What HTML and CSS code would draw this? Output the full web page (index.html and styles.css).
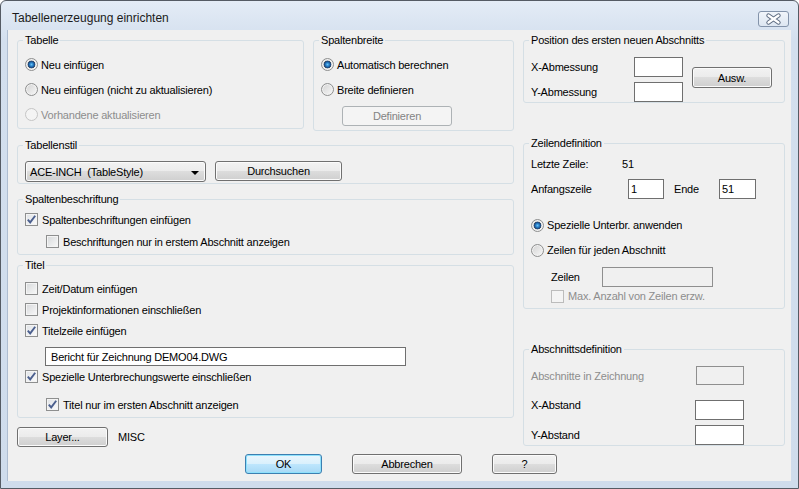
FILE: index.html
```html
<!DOCTYPE html>
<html lang="de">
<head>
    <meta charset="UTF-8">
    <title>Tabellenerzeugung einrichten</title>
    <link rel="stylesheet" href="styles.css">
</head>
<body>

<div class="window">
    <div class="titlebar">
        <span class="title">Tabellenerzeugung einrichten</span>
        <button class="close" type="button">
            <svg width="29" height="14" viewBox="0 0 29 14">
                <path d="M9.5 3.5 L19.5 10.5 M19.5 3.5 L9.5 10.5" stroke="#5d6b80" stroke-width="4.4" stroke-linecap="round" fill="none"/>
                <path d="M9.5 3.5 L19.5 10.5 M19.5 3.5 L9.5 10.5" stroke="#ffffff" stroke-width="2.4" stroke-linecap="round" fill="none"/>
            </svg>
        </button>
    </div>

    <div class="client">
        <div class="main">
            <!-- linke Spalte -->
            <div class="col-left">
                <div class="top-row">
                    <fieldset class="box box-tabelle">
                        <legend>Tabelle</legend>
                        <div class="opt row25"><span class="radio on"></span>Neu einfügen</div>
                        <div class="opt row25"><span class="radio"></span>Neu einfügen (nicht zu aktualisieren)</div>
                        <div class="opt row25 disabled"><span class="radio off"></span>Vorhandene aktualisieren</div>
                    </fieldset>

                    <fieldset class="box box-breite">
                        <legend>Spaltenbreite</legend>
                        <div class="opt row25"><span class="radio on"></span>Automatisch berechnen</div>
                        <div class="opt row25"><span class="radio"></span>Breite definieren</div>
                        <button class="btn btn-definieren" type="button" disabled>Definieren</button>
                    </fieldset>
                </div>

                <fieldset class="box box-stil">
                    <legend>Tabellenstil</legend>
                    <div class="stil-row">
                        <div class="combo"><span class="combo-text">ACE-INCH  (TableStyle)</span><span class="arrow"></span></div>
                        <button class="btn btn-durchsuchen" type="button">Durchsuchen</button>
                    </div>
                </fieldset>

                <fieldset class="box box-beschr">
                    <legend>Spaltenbeschriftung</legend>
                    <div class="opt row17 first"><span class="check on"><svg width="11" height="11" viewBox="0 0 11 11"><path d="M1.8 5.6 L4.2 8.4 L9.2 1.8" stroke="#4b5f8e" stroke-width="1.9" fill="none"/></svg></span>Spaltenbeschriftungen einfügen</div>
                    <div class="opt row17 indent gap5"><span class="check"></span>Beschriftungen nur in erstem Abschnitt anzeigen</div>
                </fieldset>

                <fieldset class="box box-titel">
                    <legend>Titel</legend>
                    <div class="opt row17"><span class="check"></span>Zeit/Datum einfügen</div>
                    <div class="opt row17 gap4"><span class="check"></span>Projektinformationen einschließen</div>
                    <div class="opt row17 gap4"><span class="check on"><svg width="11" height="11" viewBox="0 0 11 11"><path d="M1.8 5.6 L4.2 8.4 L9.2 1.8" stroke="#4b5f8e" stroke-width="1.9" fill="none"/></svg></span>Titelzeile einfügen</div>
                    <input class="field field-titel" type="text" value="Bericht für Zeichnung DEMO04.DWG">
                    <div class="opt row17 gap2"><span class="check on"><svg width="11" height="11" viewBox="0 0 11 11"><path d="M1.8 5.6 L4.2 8.4 L9.2 1.8" stroke="#4b5f8e" stroke-width="1.9" fill="none"/></svg></span>Spezielle Unterbrechungswerte einschließen</div>
                    <div class="opt row17 indent gap11"><span class="check on"><svg width="11" height="11" viewBox="0 0 11 11"><path d="M1.8 5.6 L4.2 8.4 L9.2 1.8" stroke="#4b5f8e" stroke-width="1.9" fill="none"/></svg></span>Titel nur im ersten Abschnitt anzeigen</div>
                </fieldset>

                <div class="layer-row">
                    <button class="btn btn-layer" type="button">Layer...</button>
                    <span class="layer-name">MISC</span>
                </div>
            </div>

            <!-- rechte Spalte -->
            <div class="col-right">
                <fieldset class="box box-position">
                    <legend>Position des ersten neuen Abschnitts</legend>
                    <div class="pos-row">
                        <div class="pos-grid">
                            <span>X-Abmessung</span><input class="field" type="text" value="">
                            <span>Y-Abmessung</span><input class="field" type="text" value="">
                        </div>
                        <button class="btn btn-ausw" type="button">Ausw.</button>
                    </div>
                </fieldset>

                <fieldset class="box box-zeilen">
                    <legend>Zeilendefinition</legend>
                    <div class="z-row z-letzte"><span class="z-lbl1">Letzte Zeile:</span><span>51</span></div>
                    <div class="z-row z-anfang">
                        <span class="z-lbl2">Anfangszeile</span>
                        <input class="field f-anfang" type="text" value="1">
                        <span class="z-ende">Ende</span>
                        <input class="field f-ende" type="text" value="51">
                    </div>
                    <div class="opt row20 z-radio1"><span class="radio on"></span>Spezielle Unterbr. anwenden</div>
                    <div class="opt row20 gap5"><span class="radio"></span>Zeilen für jeden Abschnitt</div>
                    <div class="z-row z-anzahl">
                        <span class="z-lbl3">Zeilen</span>
                        <input class="field f-zeilen" type="text" value="" disabled>
                    </div>
                    <div class="opt row14 z-max disabled"><span class="check off"></span>Max. Anzahl von Zeilen erzw.</div>
                </fieldset>

                <fieldset class="box box-abschnitt">
                    <legend>Abschnittsdefinition</legend>
                    <div class="ab-grid">
                        <span class="disabled">Abschnitte in Zeichnung</span><input class="field f-small" type="text" value="" disabled>
                        <span class="ab-top">X-Abstand</span><input class="field ab-end" type="text" value="">
                        <span>Y-Abstand</span><input class="field" type="text" value="">
                    </div>
                </fieldset>
            </div>
        </div>

        <div class="buttons">
            <button class="btn btn-default btn-ok" type="button">OK</button>
            <button class="btn btn-abbrechen" type="button">Abbrechen</button>
            <button class="btn btn-hilfe" type="button">?</button>
        </div>
    </div>
</div>

</body>
</html>
```

FILE: styles.css
```css
* {
    box-sizing: border-box;
}
body {
    margin: 0;
    font-family: "Liberation Sans", Arial, sans-serif;
    font-size: 11px;
    letter-spacing: -0.2px;
    color: #000;
    background-color: #fff;
}

/* Fensterrahmen */
.window {
    width: 799px;
    height: 489px;
    border: 1px solid #555b64;
    border-radius: 6px 6px 0 0;
    background: linear-gradient(#e4ecf6, #d3dfee 40px, #cfdcec);
    padding: 0 7px 7px;
    display: flex;
    flex-direction: column;
}
.titlebar {
    height: 29px;
    display: flex;
    align-items: flex-start;
}
.title {
    padding: 10px 0 0 4px;
    font-size: 12px;
    line-height: 14px;
    letter-spacing: 0;
    color: #1b1b1b;
}
.close {
    margin: 10px 2px 0 auto;
    width: 31px;
    height: 16px;
    padding: 0;
    border: 1px solid #8393aa;
    border-radius: 3px;
    background: linear-gradient(#f1f5fa, #dde6f1);
    display: flex;
    align-items: center;
    justify-content: center;
}
.client {
    height: 451px;
    background-color: #f0f0f0;
    box-shadow: -1px 0 0 #aebdd1;
    padding: 4px 5px 0 9px;
}

/* Spalten */
.main {
    display: grid;
    grid-template-columns: 497px 262px;
    column-gap: 9px;
    align-items: start;
}
.col-left,
.col-right {
    display: flex;
    flex-direction: column;
}
.top-row {
    display: flex;
    gap: 9px;
    align-items: flex-start;
}

/* Gruppenrahmen */
.box {
    margin: 0;
    padding: 0 7px;
    border: 1px solid #d5dfe5;
    border-radius: 3px;
    min-width: 0;
}
.box legend {
    padding: 0 2px;
    margin-left: -2px;
    line-height: 13px;
}
.box-tabelle {
    width: 287px;
    height: 95px;
    padding-top: 5px;
}
.box-breite {
    width: 201px;
    height: 97px;
    padding-top: 5px;
}
.box-stil {
    margin-top: 8px;
    height: 45px;
    padding-top: 9px;
}
.box-beschr {
    margin-top: 9px;
    height: 62px;
    padding-top: 5px;
}
.box-titel {
    margin-top: 4px;
    height: 159px;
    padding-top: 8px;
}
.box-position {
    height: 69px;
    padding-top: 10px;
}
.box-zeilen {
    margin-top: 34px;
    height: 172px;
    padding-top: 4px;
}
.box-abschnitt {
    margin-top: 34px;
    height: 103px;
    padding-top: 10px;
}

/* Optionen */
.opt {
    display: flex;
    align-items: center;
    white-space: nowrap;
}
.row25 { height: 25px; }
.row20 { height: 20px; }
.row17 { height: 17px; }
.row14 { height: 14px; }
.gap2 { margin-top: 2px; }
.gap4 { margin-top: 4px; }
.gap5 { margin-top: 5px; }
.gap11 { margin-top: 11px; }
.indent { padding-left: 21px; }
.disabled {
    color: #8d8d8d;
}

.radio {
    flex: none;
    width: 13px;
    height: 13px;
    margin-right: 3px;
    border: 1px solid #8e8f8f;
    border-radius: 50%;
    background: linear-gradient(135deg, #d2d2d2, #f8f8f8);
    box-shadow: inset 0 0 0 1px #f2f2f2;
}
.radio.on {
    background:
        radial-gradient(circle, #6cc4f2 0, #2c86cf 1.6px, #1b4f8c 3px, #3a4f66 3.6px, transparent 4.2px),
        linear-gradient(135deg, #d2d2d2, #f8f8f8);
}
.radio.off {
    border-color: #c5c5c5;
    background: #f4f4f4;
    box-shadow: none;
}

.check {
    flex: none;
    width: 13px;
    height: 13px;
    margin-right: 4px;
    border: 1px solid #8e8f8f;
    background: linear-gradient(135deg, #d6d8da, #f9f9f9);
    box-shadow: inset 0 0 0 1px #f4f4f4;
    display: flex;
    align-items: center;
    justify-content: center;
}
.check.on {
    background: linear-gradient(135deg, #dfe2e6, #fbfbfb);
}
.check.off {
    border-color: #bcbcbc;
    background: #f4f4f4;
    box-shadow: none;
}

/* Eingabefelder */
.field {
    height: 20px;
    margin: 0;
    padding: 0 2px;
    border: 1px solid #6f6f6f;
    background-color: #fff;
    font: inherit;
    letter-spacing: inherit;
    color: #000;
    outline: none;
}
.field:disabled {
    border-color: #8f8f8f;
    background-color: #f0f0f0;
}
.field-titel {
    width: 361px;
    height: 19px;
    margin: 8px 0 0 20px;
    padding-left: 5px;
}

/* Schaltflaechen */
.btn {
    height: 20px;
    margin: 0;
    padding: 0;
    border: 1px solid #707070;
    border-radius: 3px;
    background: linear-gradient(#f2f2f2 0%, #ebebeb 50%, #dddddd 50%, #cfcfcf 100%);
    box-shadow: inset 0 0 0 1px #fbfbfb;
    font: inherit;
    letter-spacing: inherit;
    color: #000;
}
.btn:disabled {
    border-color: #adb2b5;
    background: #f4f4f4;
    box-shadow: none;
    color: #838383;
}
.btn-default {
    border-color: #3c7fb1;
    background: linear-gradient(#eaf6fd 0%, #d9f0fc 50%, #bee6fd 50%, #a7d9f5 100%);
    box-shadow: inset 0 0 0 1px #8ee1fc;
}
.btn-definieren {
    width: 110px;
    margin: 4px 0 0 21px;
}
.btn-durchsuchen {
    width: 127px;
    margin-left: 9px;
}
.btn-layer {
    width: 91px;
}
.btn-ausw {
    width: 80px;
    height: 21px;
    margin: 10px 0 0 9px;
}

/* Tabellenstil */
.stil-row {
    display: flex;
    align-items: flex-start;
}
.combo {
    width: 181px;
    height: 21px;
    padding: 0 6px 0 4px;
    border: 1px solid #707070;
    border-radius: 3px;
    background: linear-gradient(#f2f2f2 0%, #ebebeb 50%, #dddddd 50%, #cfcfcf 100%);
    box-shadow: inset 0 0 0 1px #fbfbfb;
    display: flex;
    align-items: center;
}
.combo-text {
    white-space: pre;
    padding-top: 1px;
}
.arrow {
    margin-left: auto;
    margin-top: 2px;
    border-left: 4px solid transparent;
    border-right: 4px solid transparent;
    border-top: 4px solid #000;
}

.layer-row {
    margin-top: 9px;
    display: flex;
    align-items: center;
}
.layer-name {
    margin-left: 10px;
}

/* Position */
.pos-row {
    display: flex;
    align-items: flex-start;
}
.pos-grid {
    display: grid;
    grid-template-columns: 103px 49px;
    grid-auto-rows: 20px;
    row-gap: 5px;
    align-items: center;
}

/* Zeilendefinition */
.z-row {
    display: flex;
    align-items: center;
    height: 20px;
}
.z-anfang {
    margin-top: 5px;
}
.z-lbl1 {
    width: 91px;
}
.z-lbl2 {
    width: 97px;
}
.f-anfang {
    width: 36px;
}
.z-ende {
    width: 45px;
    margin-left: 10px;
}
.f-ende {
    width: 37px;
}
.z-radio1 {
    margin-top: 16px;
}
.z-anzahl {
    margin-top: 7px;
    padding-left: 20px;
}
.z-lbl3 {
    width: 51px;
}
.f-zeilen {
    width: 111px;
}
.z-max {
    margin-top: 2px;
    padding-left: 20px;
}

/* Abschnittsdefinition */
.ab-grid {
    display: grid;
    grid-template-columns: 164px 49px;
    grid-template-rows: 19px 30px 20px;
    row-gap: 5px;
    align-items: center;
}
.f-small {
    height: 19px;
    margin-left: 1px;
    width: 48px;
}
.ab-top {
    align-self: start;
    margin-top: 9px;
}
.ab-end {
    align-self: end;
}

/* Untere Schaltflaechen */
.buttons {
    margin-top: 7px;
    padding-left: 228px;
    display: flex;
    gap: 30px;
}
.btn-ok {
    width: 77px;
}
.btn-abbrechen {
    width: 110px;
}
.btn-hilfe {
    width: 65px;
}
```
